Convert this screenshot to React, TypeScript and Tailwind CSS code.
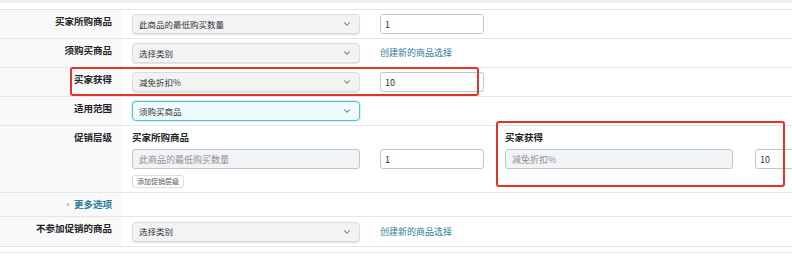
import { ChevronDown } from "lucide-react"

function Select({ value, focus = false }: { value: string; focus?: boolean }) {
  return (
    <div
      className={
        focus
          ? "w-[228px] h-[20px] rounded-[4px] border border-[#5bbfcf] bg-[#effafc] shadow-[0_0_0_1px_rgba(91,191,207,0.25)] flex items-center justify-between pl-[6px] pr-[7px] text-[8.5px] text-[#2c3338]"
          : "w-[228px] h-[20px] rounded-[4px] border border-[#dcdcde] bg-[#f3f3f4] shadow-[0_1px_1px_rgba(0,0,0,0.12)] flex items-center justify-between pl-[6px] pr-[7px] text-[8.5px] text-[#2c3338]"
      }
    >
      <span>{value}</span>
      <ChevronDown size={10} strokeWidth={2.5} className="text-[#6b7075]" />
    </div>
  )
}

function Field({ value, placeholder, wide = false }: { value?: string; placeholder?: string; wide?: boolean }) {
  return (
    <input
      readOnly
      defaultValue={value}
      placeholder={placeholder}
      className={
        wide
          ? "w-[228px] h-[20px] rounded-[3px] border border-[#c3c4c7] bg-[#f1f4f6] pl-[6px] text-[9px] text-[#2c3338] placeholder:text-[#8c8f94] outline-none"
          : "w-[104px] h-[20px] rounded-[3px] border border-[#c3c4c7] bg-white pl-[4px] text-[9px] text-[#2c3338] outline-none"
      }
    />
  )
}

function Row({
  label,
  height,
  children,
  overlay,
}: {
  label: React.ReactNode
  height: string
  children?: React.ReactNode
  overlay?: React.ReactNode
}) {
  return (
    <div className={`relative flex border-b border-[#e6e6e6] ${height}`}>
      <div className="w-[122px] shrink-0 bg-[#f9f9f9] text-right pr-[10px] pt-[5px] text-[9.5px] leading-[12px] font-semibold text-[#1d2327]">
        {label}
      </div>
      <div className="flex-1 bg-white pl-[10px]">{children}</div>
      {overlay}
    </div>
  )
}

const linkCls = "text-[9px] text-[#2a7a9e]"

export default function App() {
  return (
    <div className="w-[792px] h-[262px] overflow-hidden bg-white font-['Noto_Sans_CJK_SC','Noto_Sans',sans-serif]">
      {/* top strip */}
      <div className="h-[3px] bg-[#f0f0f1]" />
      <div className="h-[7px] border-b border-[#e6e6e6]" />

      <Row label="买家所购商品" height="h-[29px]">
        <div className="flex items-center gap-[20px] h-full">
          <Select value="此商品的最低购买数量" />
          <Field value="1" />
        </div>
      </Row>

      <Row label="须购买商品" height="h-[29px]">
        <div className="flex items-center gap-[20px] h-full">
          <Select value="选择类别" />
          <a className={linkCls}>创建新的商品选择</a>
        </div>
      </Row>

      <Row
        label="买家获得"
        height="h-[29px]"
        overlay={
          <div className="absolute left-[70px] top-[-1px] w-[409px] h-[29px] rounded-[3px] border-2 border-[#e3342a]" />
        }
      >
        <div className="flex items-center gap-[20px] h-full">
          <Select value="减免折扣%" />
          <Field value="10" />
        </div>
      </Row>

      <Row label="适用范围" height="h-[29px]">
        <div className="flex items-center h-full">
          <Select value="须购买商品" focus />
        </div>
      </Row>

      <Row
        label="促销层级"
        height="h-[67px]"
        overlay={
          <div className="absolute left-[496px] top-[-5px] w-[289px] h-[66px] rounded-[3px] border-2 border-[#e3342a]" />
        }
      >
        <div className="flex gap-[21px] pt-[5px]">
          <div className="flex flex-col">
            <div className="text-[9.5px] leading-[12px] font-semibold text-[#1d2327] h-[18px]">买家所购商品</div>
            <div className="flex gap-[20px]">
              <Field wide placeholder="此商品的最低购买数量" />
              <Field value="1" />
            </div>
            <button className="mt-[6px] self-start h-[13px] px-[4px] rounded-[3px] border border-[#dcdcde] bg-white text-[7px] leading-[11px] text-[#50575e]">
              添加促销层级
            </button>
          </div>
          <div className="flex flex-col">
            <div className="text-[9.5px] leading-[12px] font-semibold text-[#1d2327] h-[18px]">买家获得</div>
            <div className="flex gap-[22px]">
              <Field wide placeholder="减免折扣%" />
              <Field value="10" />
            </div>
          </div>
        </div>
      </Row>

      <Row
        label={
          <span className="text-[#2a7a9e]">
            <span className="text-[7px] font-normal text-[#8c8f94] mr-[4px]">^</span>更多选项
          </span>
        }
        height="h-[24px]"
      />

      <Row label="不参加促销的商品" height="h-[30px]">
        <div className="flex items-center gap-[20px] h-full">
          <Select value="选择类别" />
          <a className={linkCls}>创建新的商品选择</a>
        </div>
      </Row>

      <div className="h-[5px]" />
      <div className="h-px bg-[#e6e6e6]" />
    </div>
  )
}
